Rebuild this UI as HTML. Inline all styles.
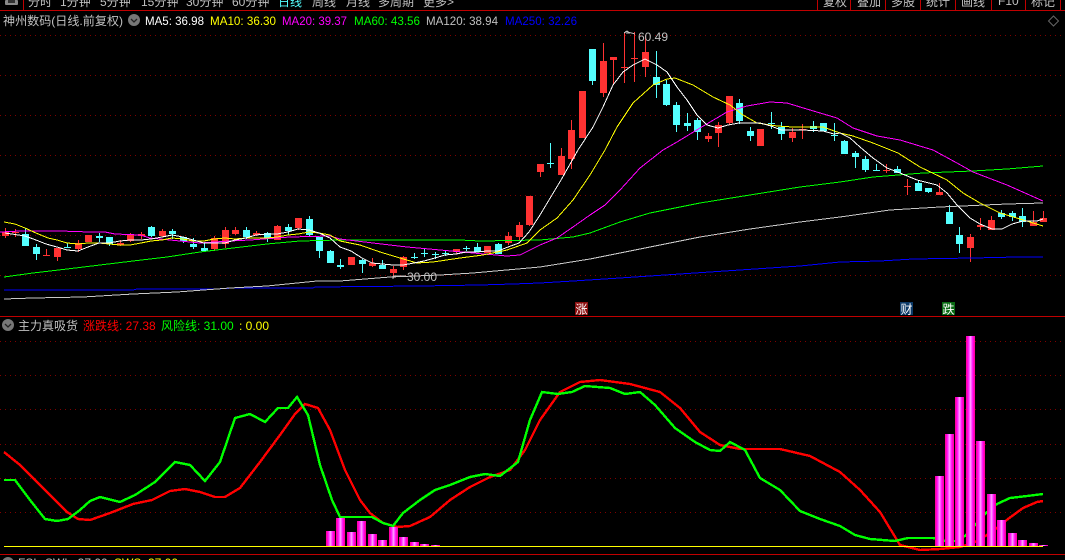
<!DOCTYPE html>
<html><head><meta charset="utf-8"><style>
html,body{margin:0;padding:0;background:#000;width:1065px;height:560px;overflow:hidden}
svg{display:block;position:absolute;left:0;top:0}
text{font-family:"Liberation Sans","WenQuanYi Zen Hei","Noto Sans CJK SC",sans-serif;font-size:12px;white-space:pre}
.g{fill:#c0c0c0}
.l{fill:none;stroke-width:1;shape-rendering:crispEdges}
.b{fill:none;stroke-width:2.4;shape-rendering:crispEdges}
</style></head><body>
<svg width="1065" height="560" viewBox="0 0 1065 560">
<defs><linearGradient id="bar" x1="0" x2="1" y1="0" y2="0"><stop offset="0" stop-color="#ff0090"/><stop offset=".15" stop-color="#ff00c8"/><stop offset=".3" stop-color="#ff20ff"/><stop offset=".5" stop-color="#ffa8ff"/><stop offset=".7" stop-color="#ff20ff"/><stop offset=".85" stop-color="#ff00c8"/><stop offset="1" stop-color="#ff0090"/></linearGradient></defs>
<rect width="1065" height="560" fill="#000"/>

<!-- toolbar -->
<rect x="5" y="0" width="13" height="5" rx="1" fill="#8a8a8a"/><rect x="8" y="0" width="7" height="3" fill="#333"/>
<g class="g">
<text x="28" y="6">分时</text><text x="60" y="6">1分钟</text><text x="100" y="6">5分钟</text><text x="141" y="6">15分钟</text><text x="186" y="6">30分钟</text><text x="232" y="6">60分钟</text>
<text x="278" y="6" style="fill:#54ffff">日线</text><text x="312" y="6">周线</text><text x="346" y="6">月线</text><text x="378" y="6">多周期</text><text x="423" y="6">更多&gt;</text>
<text x="823" y="6">复权</text><text x="857" y="6">叠加</text><text x="891" y="6">多股</text><text x="926" y="6">统计</text><text x="961" y="6">画线</text><text x="998" y="5">F10</text><text x="1031" y="6">标记</text>
</g>
<path d="M23.5 0V10M817.5 0V10M850.5 0V10M885.5 0V10M920.5 0V10M955.5 0V10M991.5 0V10M1025.5 0V10M1060.5 0V10" stroke="#c00000" fill="none" shape-rendering="crispEdges"/>
<rect x="0" y="10" width="1065" height="1" fill="#c00000"/>

<!-- title -->
<text x="3" y="25" class="g" textLength="120" lengthAdjust="spacingAndGlyphs">神州数码(日线.前复权)</text>
<circle cx="134" cy="20" r="6" fill="#777"/><path d="M131 19l3 3 3-3" stroke="#222" fill="none" stroke-width="1.3"/>
<text x="145" y="25" fill="#fff" textLength="59" lengthAdjust="spacingAndGlyphs">MA5: 36.98</text>
<text x="210" y="25" fill="#ffff00" textLength="66" lengthAdjust="spacingAndGlyphs">MA10: 36.30</text>
<text x="282" y="25" fill="#ff00ff" textLength="65" lengthAdjust="spacingAndGlyphs">MA20: 39.37</text>
<text x="354" y="25" fill="#00ff00" textLength="66" lengthAdjust="spacingAndGlyphs">MA60: 43.56</text>
<text x="426" y="25" class="g" textLength="72" lengthAdjust="spacingAndGlyphs">MA120: 38.94</text>
<text x="505" y="25" fill="#0000ff" textLength="72" lengthAdjust="spacingAndGlyphs">MA250: 32.26</text>
<path d="M1053.5 16l5 5-5 5-5-5z" fill="none" stroke="#666"/>

<!-- grid top -->
<path d="M0 35.5H1065M0 75.5H1065M0 115.5H1065M0 155.5H1065M0 195.5H1065M0 235.5H1065M0 275.5H1065" stroke="#800000" stroke-dasharray="1 4" fill="none" shape-rendering="crispEdges"/>

<!-- candle wicks -->
<path shape-rendering="crispEdges" fill="none" stroke="#ff3232" d="M5.5 228V238M15.5 229V237M46.5 249V256M57.5 248V261M78.5 240V252M120.5 240V246M130.5 233V242M141.5 232V239M162.5 229V237M214.5 236V251M225.5 227V248M235.5 227V235M256.5 231V236M277.5 225V240M298.5 218V230M372.5 258V267M393.5 266V278M403.5 256V270M456.5 249V254M508.5 232V245M519.5 222V240M529.5 196V226M540.5 164V177M561.5 148V175M571.5 120V169M603.5 43V97M613.5 57V84M624.5 32V83M634.5 32V82M645.5 35V77M708.5 133V142M718.5 122V147M729.5 96V125M792.5 128V142M802.5 124V139M886.5 164V173M907.5 179V195M939.5 183V195M970.5 234V262M980.5 218V230M991.5 216V230M1033.5 211V226M1043.5 211V222"/>
<path shape-rendering="crispEdges" fill="none" stroke="#54ffff" d="M25.5 228V246M36.5 244V260M67.5 243V248M99.5 233V242M109.5 237V246M151.5 226V237M172.5 229V239M183.5 237V243M193.5 238V249M204.5 242V251M246.5 227V239M267.5 232V242M288.5 224V235M309.5 216V236M319.5 237V258M330.5 250V263M340.5 259V269M362.5 259V273M382.5 260V269M414.5 253V259M424.5 248V257M435.5 252V259M445.5 251V256M466.5 246V251M477.5 243V252M498.5 243V254M550.5 143V168M592.5 49V85M656.5 51V98M666.5 80V106M676.5 102V132M687.5 113V131M697.5 118V140M739.5 99V124M750.5 127V141M771.5 112V129M781.5 122V140M813.5 121V132M834.5 123V141M844.5 140V154M855.5 151V168M865.5 156V172M876.5 164V171M897.5 166V173M918.5 181V191M928.5 188V193M949.5 205V224M959.5 227V253M1001.5 210V219M1012.5 211V221M1022.5 208V227"/>
<!-- candle bodies -->
<path shape-rendering="crispEdges" fill="#ff3232" d="M2 232h7V236H2zM12 232h7V233H12zM43 255h7V256H43zM54 248h7V257H54zM75 243h7V249H75zM85 235h7V242H85zM117 243h7V245H117zM127 235h7V241H127zM138 234h7V236H138zM159 231h7V236H159zM211 238h7V249H211zM222 230h7V244H222zM232 230h7V234H232zM253 233h7V235H253zM274 226h7V240H274zM295 218h7V228H295zM348 257h7V265H348zM369 263h7V266H369zM390 269h7V273H390zM400 257h7V267H400zM453 249h7V252H453zM484 246h7V253H484zM505 236h7V243H505zM516 225h7V237H516zM526 196h7V225H526zM537 164h7V172H537zM558 156h7V175H558zM568 130h7V159H568zM579 91h7V138H579zM600 61h7V93H600zM610 57h7V60H610zM621 67h7V68H621zM631 58h7V59H631zM642 52h7V67H642zM705 136h7V139H705zM715 125h7V133H715zM726 96h7V123H726zM757 129h7V146H757zM789 132h7V138H789zM799 129h7V130H799zM883 170h7V171H883zM904 186h7V187H904zM936 192h7V195H936zM967 237h7V248H967zM977 225h7V227H977zM988 220h7V230H988zM1030 222h7V226H1030zM1040 218h7V222H1040z"/>
<path shape-rendering="crispEdges" fill="#54ffff" d="M22 234h7V246H22zM33 247h7V254H33zM64 247h7V248H64zM96 236h7V238H96zM106 237h7V244H106zM148 227h7V236H148zM169 231h7V234H169zM180 237h7V241H180zM190 244h7V247H190zM201 248h7V251H201zM243 230h7V237H243zM264 233h7V238H264zM285 227h7V231H285zM306 219h7V235H306zM316 237h7V251H316zM327 251h7V263H327zM337 265h7V267H337zM359 260h7V264H359zM379 265h7V269H379zM411 257h7V258H411zM421 253h7V254H421zM432 254h7V255H432zM442 253h7V254H442zM463 248h7V249H463zM474 247h7V252H474zM495 244h7V254H495zM547 163h7V164H547zM589 49h7V81H589zM653 77h7V85H653zM663 84h7V105H663zM673 105h7V125H673zM684 123h7V126H684zM694 120h7V132H694zM736 103h7V121H736zM747 131h7V136H747zM768 123h7V124H768zM778 127h7V134H778zM810 126h7V129H810zM820 123h7V131H820zM831 135h7V136H831zM841 141h7V154H841zM852 153h7V157H852zM862 159h7V170H862zM873 170h7V171H873zM894 169h7V173H894zM915 183h7V191H915zM925 188h7V192H925zM946 212h7V224H946zM956 235h7V244H956zM998 213h7V217H998zM1009 213h7V217H1009zM1019 216h7V222H1019z"/>

<!-- MAs -->
<polyline class="l" stroke="#0000ff" points="4,290 133,290 137,289 217,289 233,288 313,288 315,287 420,286 480,285 513,284 540,283 573,281 620,278 680,274 740,270 800,266 840,262 880,261 913,259 973,258 1017,257 1043,257"/>
<polyline class="l" stroke="#c8c8c8" points="4,299 33,298 83,297 133,294 177,292 230,288 267,286 317,281 340,281 390,277 440,275 473,273 540,267 590,259 650,247 700,237 750,229 800,222 840,217 890,210 940,207 1007,204 1043,203"/>
<polyline class="l" stroke="#00ff00" points="4,277 33,273 67,269 100,265 133,261 167,257 200,252 233,248 267,244 300,241 340,240 460,240 480,241 540,240 573,237 590,233 620,222 650,213 700,203 750,195 800,187 840,182 873,177 923,173 973,171 1007,169 1043,166"/>
<polyline class="l" stroke="#ff00ff" points="0,232 20,231 60,231 90,232 105,232 115,234 140,235 150,238 170,240 200,243 230,241 250,240 290,237 330,236 340,239 373,243 407,247 440,250 473,253 507,256 520,255 540,245 557,238 573,227 590,215 605,205 620,190 640,168 663,150 677,142 700,128 727,112 747,106 770,102 787,103 810,110 837,118 853,128 877,136 900,140 933,150 957,163 973,172 1007,185 1043,201"/>
<polyline class="l" stroke="#ffff00" points="4,222 15,224 25,228 36,233 48,238 57,240 67,243 78,244 88,243 99,243 109,244 120,245 130,245 141,243 151,241 162,240 172,238 183,239 193,241 204,241 214,239 225,238 235,239 246,238 267,238 277,237 288,235 298,234 309,232 319,233 330,235 340,241 360,245 380,252 400,258 417,263 433,262 460,258 483,255 507,250 527,243 540,230 557,218 573,200 590,175 605,150 617,127 633,103 653,85 667,79 675,78 693,85 713,97 730,105 743,115 757,123 777,126 793,127 823,127 840,133 853,136 873,143 898,153 920,167 947,180 963,193 980,203 1000,213 1020,219 1043,226"/>
<polyline class="l" stroke="#ffffff" points="5,233 25,236 36,240 46,244 57,247 67,250 78,251 88,247 99,243 109,243 120,241 130,240 141,240 151,239 162,237 172,235 183,237 193,240 204,243 214,243 225,243 235,240 246,238 256,235 267,234 277,234 288,232 298,229 309,230 319,233 330,238 340,247 351,251 362,258 372,263 393,265 403,265 414,263 424,261 435,258 445,255 456,254 466,252 477,252 487,251 498,251 508,247 519,243 529,232 540,215 561,180 578,150 593,127 603,107 613,85 623,72 633,65 645,59 657,65 667,72 677,87 687,100 697,115 707,125 718,128 728,125 739,123 760,123 771,126 781,130 802,130 823,131 834,134 840,133 850,138 860,147 873,158 887,168 900,173 917,180 937,185 947,193 957,205 970,218 980,224 992,229 1002,229 1012,224 1023,221 1037,221 1043,219"/>

<!-- price labels -->
<text x="638" y="41" class="g">60.49</text>
<path d="M624 33l3-2 2 2h-3M628 32l7 2" stroke="#c0c0c0" fill="none" shape-rendering="crispEdges"/>
<text x="407" y="281" class="g">30.00</text>
<path d="M393 279v-3M393 276h13" stroke="#c0c0c0" fill="none" shape-rendering="crispEdges"/>

<!-- markers -->
<rect x="575" y="302" width="13" height="13" fill="#8b0f0f"/><text x="575.5" y="313.5" fill="#fff">涨</text>
<rect x="900" y="302" width="13" height="13" fill="#0c3a68"/><text x="900.5" y="313.5" fill="#fff">财</text>
<rect x="942" y="302" width="13" height="13" fill="#0a6a14"/><text x="942.5" y="313.5" fill="#fff">跌</text>

<rect x="0" y="316" width="1065" height="1" fill="#c00000"/>

<!-- pane 2 title -->
<circle cx="8" cy="325" r="6" fill="#777"/><path d="M5 324l3 3 3-3" stroke="#222" fill="none" stroke-width="1.3"/>
<text x="18" y="330" class="g">主力真吸货</text>
<text x="83" y="330" fill="#ff0000">涨跌线: 27.38</text>
<text x="161" y="330" fill="#00ff00">风险线: 31.00</text>
<text x="239" y="330" fill="#ffff00">: 0.00</text>

<path d="M0 341.5H1065M0 375.5H1065M0 409.5H1065M0 444.5H1065M0 478.5H1065M0 512.5H1065" stroke="#800000" stroke-dasharray="1 4" fill="none" shape-rendering="crispEdges"/>

<!-- curves -->
<polyline class="b" stroke="#ff0000" points="4,452 20,465 40,485 55,500 67,512 78,519 90,520 110,513 133,504 152,500 170,491 185,489 200,492 215,497 225,497 240,488 260,462 280,435 295,414 305,404 318,408 330,430 345,470 360,500 370,513 383,523 397,527 410,526 430,517 450,500 470,487 490,477 510,470 525,450 540,420 560,392 580,382 600,380 630,384 660,392 680,408 700,432 720,445 740,449 780,449 810,456 840,472 860,490 880,512 900,545 920,550 940,549 960,547 975,542 987,535 997,528 1008,519 1023,508 1037,502 1043,501"/>
<polyline class="b" stroke="#00ff00" points="4,480 15,480 30,500 45,519 57,521 68,519 80,510 90,501 100,497 120,502 135,495 155,482 175,462 190,465 205,481 220,462 235,418 250,414 265,422 278,408 288,408 297,397 308,415 320,465 332,500 340,517 372,517 383,523 393,526 403,513 420,500 435,490 450,485 470,477 485,474 500,476 518,462 530,420 542,392 558,394 572,392 585,386 610,388 625,394 640,392 655,405 675,428 695,442 710,450 720,451 730,442 745,450 760,478 780,490 800,511 820,519 840,526 855,535 870,539 895,541 908,538 933,538 945,541 955,541 965,536 975,525 986,513 997,504 1010,498 1027,496 1043,494"/>

<!-- bars -->
<g fill="url(#bar)" shape-rendering="crispEdges">
<rect x="326" y="531" width="9" height="15"/><rect x="336" y="518" width="9" height="28"/><rect x="347" y="532" width="9" height="14"/><rect x="357" y="521" width="9" height="25"/><rect x="368" y="534" width="9" height="12"/><rect x="378" y="540" width="9" height="6"/><rect x="389" y="527" width="9" height="19"/><rect x="399" y="537" width="9" height="9"/><rect x="410" y="542" width="9" height="4"/><rect x="420" y="544" width="9" height="2"/><rect x="431" y="545" width="9" height="1"/>
<rect x="935" y="476" width="9" height="70"/><rect x="945" y="434" width="9" height="112"/><rect x="955" y="397" width="9" height="149"/><rect x="966" y="336" width="9" height="210"/><rect x="976" y="441" width="9" height="105"/><rect x="987" y="494" width="9" height="52"/><rect x="997" y="520" width="9" height="26"/><rect x="1008" y="533" width="9" height="13"/><rect x="1018" y="540" width="9" height="6"/><rect x="1029" y="543" width="9" height="3"/><rect x="1039" y="545" width="9" height="1"/>
</g>
<rect x="4" y="546" width="1039" height="1" fill="#ffff00"/>
<rect x="0" y="554" width="1065" height="1" fill="#c00000"/>

<!-- pane 3 title -->
<circle cx="8" cy="563" r="6" fill="#777"/>
<text x="18" y="567" class="g">FSL:</text>
<text x="45" y="567" class="g">SWL: 37.00</text>
<text x="114" y="567" fill="#ffff00">SWS: 37.00</text>
</svg>
</body></html>
